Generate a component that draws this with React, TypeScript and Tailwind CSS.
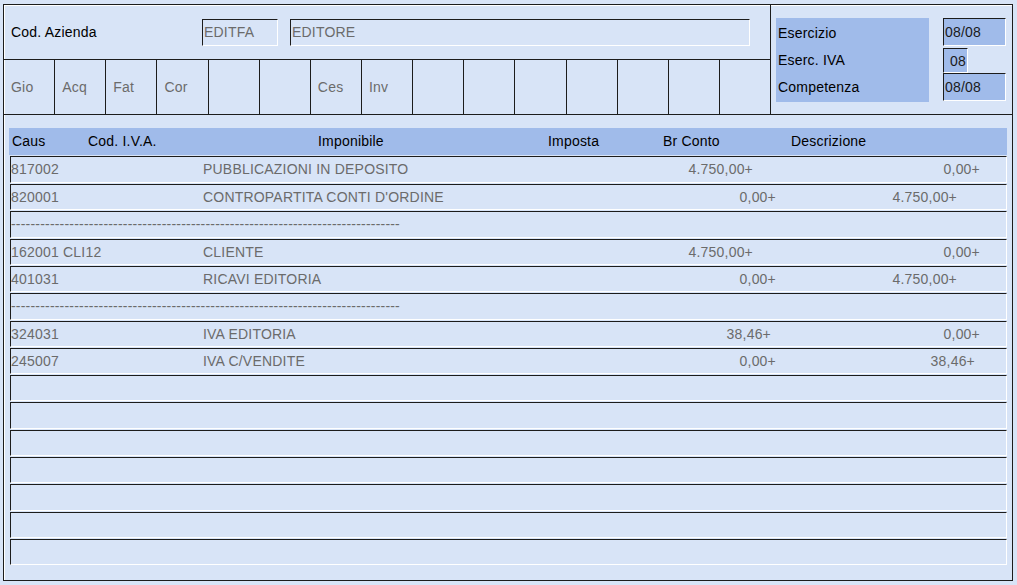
import React from "react";

const DARK = "border-[#1c1c1c]";

type Row =
  | { kind: "data"; code: string; desc: string; a: string; ap: string; b: string; bp: string }
  | { kind: "dash" }
  | { kind: "empty" };

const rows: Row[] = [
  { kind: "data", code: "817002", desc: "PUBBLICAZIONI IN DEPOSITO", a: "4.750,00+", ap: "pr-[23px]", b: "0,00+", bp: "pr-0" },
  { kind: "data", code: "820001", desc: "CONTROPARTITA CONTI D'ORDINE", a: "0,00+", ap: "pr-0", b: "4.750,00+", bp: "pr-[23px]" },
  { kind: "dash" },
  { kind: "data", code: "162001 CLI12", desc: "CLIENTE", a: "4.750,00+", ap: "pr-[23px]", b: "0,00+", bp: "pr-0" },
  { kind: "data", code: "401031", desc: "RICAVI EDITORIA", a: "0,00+", ap: "pr-0", b: "4.750,00+", bp: "pr-[23px]" },
  { kind: "dash" },
  { kind: "data", code: "324031", desc: "IVA EDITORIA", a: "38,46+", ap: "pr-[5px]", b: "0,00+", bp: "pr-0" },
  { kind: "data", code: "245007", desc: "IVA C/VENDITE", a: "0,00+", ap: "pr-0", b: "38,46+", bp: "pr-[5px]" },
  { kind: "empty" },
  { kind: "empty" },
  { kind: "empty" },
  { kind: "empty" },
  { kind: "empty" },
  { kind: "empty" },
  { kind: "empty" },
];

const tall = [true, false, true, false, false, true, false, false, false, true, false, false, true, false, false];

const buttons = ["Gio", "Acq", "Fat", "Cor", "", "", "Ces", "Inv", "", "", "", "", "", "", ""];

function Inset({ className, children }: { className: string; children?: React.ReactNode }) {
  return (
    <div
      className={`border-t border-l border-b border-r border-t-[#1c1c1c] border-l-[#1c1c1c] border-b-white border-r-white flex items-center ${className}`}
    >
      {children}
    </div>
  );
}

export default function App() {
  return (
    <div className="w-[1017px] h-[585px] bg-[#d8e4f7] pt-[4px] pl-[3px] text-[14px] leading-none tracking-[0.2px] font-['Liberation_Sans',Arial,sans-serif] overflow-hidden">
      <div className={`w-[1010px] h-[577px] border ${DARK} flex flex-col shadow-[inset_1px_1px_0_#ffffff]`}>
        {/* Top section */}
        <div className={`flex h-[110px] border-b ${DARK}`}>
          <div className={`w-[767px] border-r ${DARK} flex flex-col`}>
            <div className={`h-[55px] border-b ${DARK} flex items-center pl-[7px]`}>
              <div className="w-[191px] text-black">Cod. Azienda</div>
              <Inset className="w-[76px] h-[27px] pl-px text-[#6b6b6b]">EDITFA</Inset>
              <Inset className="ml-[12px] w-[460px] h-[27px] pl-px text-[#6b6b6b]">EDITORE</Inset>
            </div>
            <div className="flex-1 flex">
              {buttons.map((b, i) => (
                <div
                  key={i}
                  className={`flex-1 flex items-center pl-[7px] text-[#6b6b6b] ${i < buttons.length - 1 ? `border-r ${DARK}` : ""}`}
                >
                  {b}
                </div>
              ))}
            </div>
          </div>
          <div className="flex-1 flex pl-[5px] pt-[13px]">
            <div className="w-[153px] h-[84px] bg-[#a0bbea] flex flex-col pt-px pl-[2px] text-black">
              <div className="h-[27px] flex items-center">Esercizio</div>
              <div className="h-[27px] flex items-center">Eserc. IVA</div>
              <div className="h-[28px] flex items-center">Competenza</div>
            </div>
            <div className="ml-[14px] flex flex-col">
              <Inset className="w-[63px] h-[28px] bg-[#a0bbea] pl-px text-[#1a1a1a]">08/08</Inset>
              <Inset className="mt-[2px] w-[25px] h-[25px] bg-[#a0bbea] pl-[6px] text-[#1a1a1a]">08</Inset>
              <Inset className="w-[63px] h-[28px] bg-[#a0bbea] pl-px text-[#1a1a1a]">08/08</Inset>
            </div>
          </div>
        </div>

        {/* Body */}
        <div className="flex-1 pl-[5px] pt-[13px]">
          <div className="w-[998px] h-[27px] mb-px pb-[2px] bg-[#a0bbea] flex items-center text-black">
            <span className="w-[79px] pl-[3px]">Caus</span>
            <span className="w-[230px]">Cod. I.V.A.</span>
            <span className="w-[230px]">Imponibile</span>
            <span className="w-[115px]">Imposta</span>
            <span className="w-[128px]">Br Conto</span>
            <span>Descrizione</span>
          </div>
          <div className="flex flex-col">
            {rows.map((r, i) => (
              <div key={i} className={tall[i] ? "h-[28px]" : "h-[27px]"}>
                <div className="ml-px w-[997px] h-full pb-px">
                  <Inset className="w-full h-full pb-px text-[#6b6b6b]">
                    {r.kind === "data" && (
                      <>
                        <span className="w-[192px] whitespace-nowrap">{r.code}</span>
                        <span className="w-[373px] whitespace-nowrap">{r.desc}</span>
                        <span className={`w-[200px] text-right ${r.ap}`}>{r.a}</span>
                        <span className={`w-[204px] text-right ${r.bp}`}>{r.b}</span>
                      </>
                    )}
                    {r.kind === "dash" && (
                      <span className="whitespace-nowrap">{"-".repeat(80)}</span>
                    )}
                  </Inset>
                </div>
              </div>
            ))}
          </div>
        </div>
      </div>
    </div>
  );
}
